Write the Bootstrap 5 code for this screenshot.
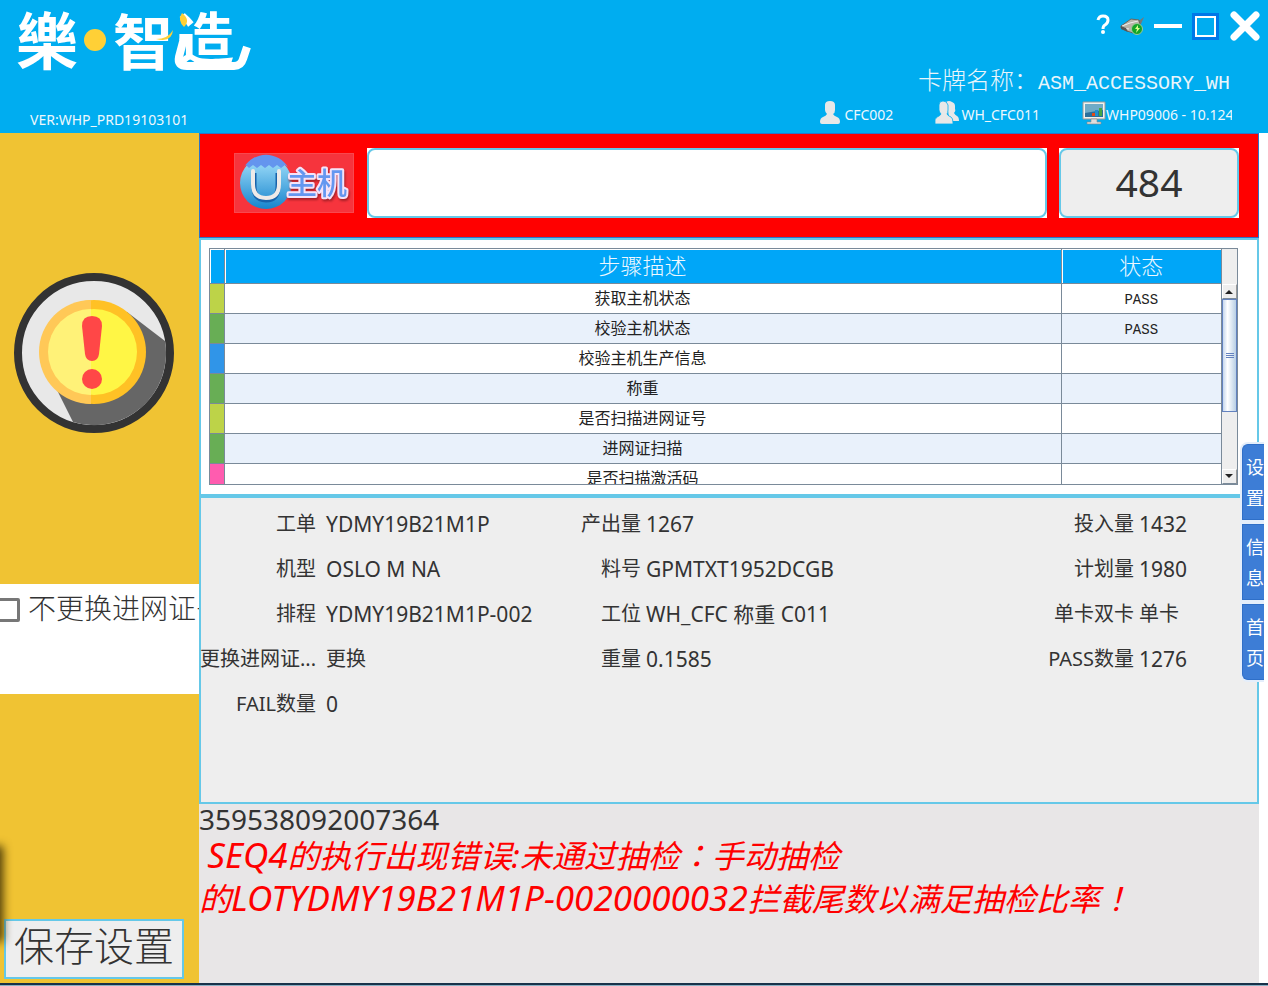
<!DOCTYPE html>
<html lang="zh-CN">
<head>
<meta charset="utf-8">
<meta name="viewport" content="width=device-width, initial-scale=1">
<title>樂·智造</title>
<link href="https://cdn.jsdelivr.net/npm/bootstrap@5.3.0/dist/css/bootstrap.min.css" rel="stylesheet">
<style>
:root{--sky:#00adf0;--edge:#65c8e8;--grid:#7a8a99;--ink:#333}
body{font-family:"Noto Sans","Noto Sans CJK SC",sans-serif;color:var(--ink);background:#fff;font-size:20px;line-height:30px}
.thin{font-family:"Liberation Mono","Noto Sans CJK SC",monospace;font-weight:300}
.topbar{background:var(--sky);height:133px;color:#fff}
.topbar button{background:none;border:0;padding:0;line-height:0}
.brand{padding:8px 0 6px 14px}
.brand svg{overflow:visible}
.small-line{font-size:14px;line-height:20px;color:#eef8fd}
.version{padding-left:30px}
.controls{height:52px;padding-right:8px;gap:10px}
.cardname{font-size:24px;line-height:36px;height:36px;margin-top:13px;padding-right:38px;color:#e9f5fb}
.cardname .code{font-size:20px}
.who{gap:42px;padding-right:36px}
.host{width:150px;overflow:hidden;white-space:nowrap}
.side{width:199px;flex:none;background:#f0c333;position:relative;overflow:hidden}
.warn{margin:140px 0 151px 14px}
.opt{background:#fff;height:110px;padding-top:12px;white-space:nowrap;font-size:28px;line-height:32px}
.opt input{appearance:none;width:24px;height:24px;flex:none;border:3px solid #777;border-radius:2px;background:#fff;margin:2px 8px 0 -4px}
.save{margin:auto 0 4px 4px;width:180px;height:60px;font-size:40px;line-height:52px;padding:4px 0 0;background:#eee;border:2px solid var(--edge);color:var(--ink)}
.shade{position:absolute;left:-12px;bottom:44px;width:12px;height:90px;box-shadow:0 0 10px 3px #4a3a08}
.work{margin-right:9px;min-width:0;position:relative}
.scan{background:red;border:1px solid #2c74c8;height:105px;padding:14px 19px 0 34px;gap:12px}
.field{height:70px;border:2px solid var(--edge);border-radius:8px;background:#fff;width:100%;outline:0;padding:0 12px}
.corner{background:#fff;min-width:0}
.count{background:#eee;width:180px;font-size:39px;line-height:64px;text-align:center}
.unit{width:120px;height:60px;margin:5px 1px 0 0;flex:none;background:#f6343d;border:1px solid #f8484f;padding:0}
.steps{height:258px;border:2px solid var(--edge);padding:8px 19px 9px 8px}
.grid-box{height:237px;border:1px solid var(--grid);overflow:hidden}
.steps table{width:100%;table-layout:fixed;border-collapse:collapse;font-size:16px;line-height:24px;color:#222;text-align:center}
.steps th{background:#00a6f8;color:#eef8ff;height:34px;padding:6px 0 0;font-size:22px;font-weight:300;border:solid var(--grid);border-width:0 1px 1px 0;box-shadow:inset 1px 1px #fff}
.steps td{height:30px;padding:3px 0 0;font-weight:400;border:solid var(--grid);border-width:0 1px 1px 0}
.steps td:last-child{font-size:14px}
.steps th:last-child,.steps td:last-child{border-right:0}
.steps tr:nth-child(even) td{background:#e9f1fb}
.steps td.lime{background:#bdd348!important}.steps td.green{background:#68ae55!important}.steps td.blue{background:#3095e8!important}.steps td.pink{background:#ff5caf!important}
.bar{width:16px;flex:none;background:#eee;border-left:1px solid var(--grid)}
.bar .head{height:35px}
.bar button{height:15px;width:100%;padding:0;border:1px solid #fff;border-right-color:#999;border-bottom-color:#7a8a99;background:#eee;line-height:0}
.thumb{height:113px;border:1px solid #6382bf;background:linear-gradient(90deg,#c5d7ed,#fff 35%,#b8cfe5)}
.info{background:#eee;border:2px solid var(--edge);height:308px;padding-top:11px;display:grid;grid-template-columns:115px minmax(0,260fr) 65px minmax(0,398fr) 95px 123px;grid-auto-rows:45px;white-space:nowrap;margin:0}
.info dt{font-weight:400;display:flex;justify-content:flex-end}
.info dd{margin:0;padding-left:5px;font-size:21px}
.info .first{padding-left:10px}
.info .cn{font-size:20px}
.msg{background:#e8e6e7}
.serial{font-size:28px;line-height:30px}
.err{font-size:32px;line-height:43px;color:red;font-style:italic;white-space:pre-wrap}
.err .latin{font-size:35px;line-height:40px}
.err .mid{font-family:"Noto Sans CJK TC",sans-serif;line-height:40px}
.tabs-side{position:absolute;right:-5px;top:309px;width:24px;overflow:hidden;border-radius:8px 0 0 8px;background:#e4eefb;padding:2px 0 2px 2px;gap:4px;display:flex;flex-direction:column}
.tabs-side button{border:1px solid #2f6fc8;border-right:0;background:#3d7dd6;color:#fff;font-size:18px;line-height:31px;padding:7px 0 7px 3px;height:76px;width:100%;text-align:left;white-space:nowrap;overflow:hidden}
.tabs-side button:first-child{border-radius:6px 0 0 0}.tabs-side button:last-child{border-radius:0 0 0 6px}
.foot{height:3px;background:#8bb0c4;border-top:2px solid #17324a}
</style>
</head>
<body>
<div class="d-flex flex-column min-vh-100">
<header class="topbar d-flex justify-content-between">
  <div>
    <div class="brand">
      <svg class="d-block" width="244" height="96" viewBox="14 8 244 96" role="img" aria-label="樂·智造">
        <g fill="#fff" font-family="Noto Sans CJK TC" font-weight="700">
          <text x="16" y="65" font-size="62">樂</text><text x="113" y="65" font-size="60">智</text><text x="177" y="60" font-size="57">造</text>
        </g>
        <path d="M184 38l-5 19q-2 9 8 9h47q7 0 9-7l4-12" fill="none" stroke="#fff" stroke-width="8"/>
        <circle cx="95" cy="40" r="11" fill="#ffd036"/>
        <path d="M182 13q-5 7 2 14 7-7-2-14zM156 39q12 0 17-9-1 13-17 9z" fill="#ffd036"/>
      </svg>
    </div>
    <div class="small-line version">VER:WHP_PRD19103101</div>
  </div>
  <div class="d-flex flex-column">
    <div class="controls d-flex align-items-center justify-content-end">
      <button type="button" aria-label="帮助"><svg width="14" height="24" viewBox="0 0 14 24"><path d="M2 6q1-4 5-4 5 0 5 4 0 3-3 5-2 1-2 4" fill="none" stroke="#fff" stroke-width="3"/><circle cx="7" cy="18" r="2" fill="#fff"/></svg></button>
      <button type="button" aria-label="连接"><svg width="24" height="20" viewBox="0 0 24 20"><path d="M15 5l5-1 4-3-3 7-4 3z" fill="#777"/><path d="M1 10L11 3l8 1 1 5-7 8-6-2-6-3z" fill="#b9b4a9" stroke="#6a665f"/><path d="M2 10l8-3 8-2M3 12l6 1" stroke="#eee" fill="none"/><path d="M1 10l5 2 2 4-7-3z" fill="#555"/><circle cx="17" cy="13" r="5.500" fill="#14a527" stroke="#9bc99d"/><path d="M18 9l-3 4h2l-1 4 4-5h-2z" fill="#d9ff8e"/></svg></button>
      <button type="button" aria-label="最小化"><svg width="28" height="27"><path d="M0 13h28" stroke="#fff" stroke-width="4"/></svg></button>
      <button type="button" aria-label="最大化"><svg width="28" height="27"><path d="M0 0h27v27H0z" fill="#0078e8"/><path d="M4 4h19v19H4z" fill="#00adf0" stroke="#fff" stroke-width="2"/></svg></button>
      <button type="button" aria-label="关闭"><svg width="30" height="30"><path d="M4 4l22 22M26 4L4 26" stroke="#fff" stroke-width="7" stroke-linecap="round"/></svg></button>
    </div>
    <div class="cardname thin text-end">卡牌名称：<span class="code">ASM_ACCESSORY_WH</span></div>
    <div class="who d-flex small-line">
      <div class="d-flex align-items-end gap-1"><svg width="20" height="24" viewBox="0 0 20 24"><path d="M5 4q0-4 5-4t5 4v5q0 3-2 4 1 2 4 3 3 1 3 5 0 2-2 2H2q-2 0-2-2 0-4 3-5 3-1 4-3-2-2-2-4z" fill="#e8e8e8"/></svg><span>CFC002</span></div>
      <div class="d-flex align-items-end"><svg width="26" height="24" viewBox="0 0 26 24"><path d="M11 1q3-2 6 0 3 1 3 4v3q1 2-1 4 1 2 3 3 2 1 2 5h-9z" fill="#e8e8e8"/><path d="M4 4q0-4 4-4t5 4v5q0 3-1 4 1 2 4 3 2 1 2 6v1H0q-1-5 2-7 3-1 4-3-2-2-2-4z" fill="#e8e8e8" stroke="#00adf0" stroke-width=".8"/></svg><span>WH_CFC011</span></div>
      <div class="d-flex align-items-end host"><svg class="flex-shrink-0" width="24" height="24" viewBox="0 0 24 24"><path d="M1 1h22v17H1z" fill="#f2f2ee" stroke="#999"/><path d="M3 3h18v13H3z" fill="#2b6f9b"/><path d="M3 3h18v6L3 12z" fill="#6fabc7"/><path d="M10 12h3v3h-3z" fill="#e54a15"/><path d="M13 9h3v6h-3z" fill="#1e90d2"/><path d="M17 7h3v8h-3z" fill="#45a645"/><path d="M9 18h6v3h4v2H5v-2h4z" fill="#ddd" stroke="#888" stroke-width=".6"/></svg><span>WHP09006 - 10.124</span></div>
    </div>
  </div>
</header>
<div class="d-flex flex-grow-1">
  <aside class="side d-flex flex-column">
    <svg class="warn flex-shrink-0" width="160" height="160" viewBox="0 0 160 160" role="img" aria-label="警告">
      <circle cx="80" cy="80" r="76" fill="#e8e8e8" stroke="#333" stroke-width="8"/>
      <path d="M113 39L151 68A72 72 0 0 1 59 149L42 115z" fill="#666"/>
      <circle cx="80" cy="79" r="52" fill="#ffc125"/><path d="M77 27a52 52 0 0 0 0 104z" fill="#ffc857"/>
      <circle cx="80" cy="79" r="43" fill="#fff645"/><path d="M77 36a43 43 0 0 0 0 86z" fill="#fff278"/>
      <path d="M68 53q0-10 10-10t10 10l-3 28q-1 7-7 7t-7-7z" fill="#ff4747"/><circle cx="78" cy="106" r="10" fill="#ff4747"/>
    </svg>
    <div class="opt flex-shrink-0 d-flex thin"><input type="checkbox" id="keep"><label for="keep">不更换进网证书</label></div>
    <button type="button" class="save thin flex-shrink-0">保存设置</button>
    <div class="shade"></div>
  </aside>
  <main class="work flex-grow-1 d-flex flex-column">
    <section class="scan d-flex align-items-start">
      <button class="unit" type="button" aria-label="主机">
        <svg class="d-block" width="118" height="58" viewBox="1 1 118 58">
          <defs><linearGradient id="bag" x2="0" y2="1"><stop offset=".15" stop-color="#91d4f5"/><stop offset="1" stop-color="#1684cd"/></linearGradient></defs>
          <circle cx="32" cy="30" r="26" fill="url(#bag)"/>
          <path d="M10 14A26 26 0 0 1 54 14l-3-2-4 3-4-3-4 3-4-3-4 3-4-3-4 3-4-3-4 3-3-3z" fill="#6495ee"/>
          <path d="M20 20v13q0 14 12 14t12-14V20" fill="none" stroke="#1762aa" stroke-width="5"/>
          <path d="M19 18v13q0 14 13 14t13-14V18" fill="none" stroke="#eeeae8" stroke-width="4" stroke-linecap="round"/>
          <text x="53" y="41" font-family="Noto Sans CJK SC" font-weight="500" font-size="30" fill="#6497f0" stroke="#f5e3f8" stroke-width="4" paint-order="stroke" stroke-linejoin="round" style="filter:drop-shadow(1px 2px 1px #a52027)">主机</text>
        </svg>
      </button>
      <div class="corner flex-grow-1 d-flex"><input class="field" type="text" aria-label="扫描"></div>
      <div class="corner flex-shrink-0"><div class="field count">484</div></div>
    </section>
    <section class="steps">
      <div class="grid-box d-flex">
        <div class="flex-grow-1">
        <table class="thin">
          <colgroup><col style="width:14px"><col><col style="width:160px"></colgroup>
          <thead><tr><th></th><th>步骤描述</th><th>状态</th></tr></thead>
          <tbody>
            <tr><td class="lime"></td><td>获取主机状态</td><td>PASS</td></tr>
            <tr><td class="green"></td><td>校验主机状态</td><td>PASS</td></tr>
            <tr><td class="blue"></td><td>校验主机生产信息</td><td></td></tr>
            <tr><td class="green"></td><td>称重</td><td></td></tr>
            <tr><td class="lime"></td><td>是否扫描进网证号</td><td></td></tr>
            <tr><td class="green"></td><td>进网证扫描</td><td></td></tr>
            <tr><td class="pink"></td><td>是否扫描激活码</td><td></td></tr>
          </tbody>
        </table>
        </div>
        <div class="bar d-flex flex-column">
          <div class="head"></div>
          <button type="button" aria-label="向上"><svg width="9" height="5"><path d="M0 5l4-4 4 4z" fill="#222"/></svg></button>
          <div class="thumb d-flex align-items-center justify-content-center"><svg width="8" height="5"><path d="M0 0h8v1H0zM0 2h8v1H0zM0 4h8v1H0z" fill="#6382bf"/></svg></div>
          <button type="button" class="mt-auto" aria-label="向下"><svg width="9" height="5"><path d="M0 0h8L4 4z" fill="#222"/></svg></button>
        </div>
      </div>
    </section>
    <dl class="info">
      <dt>工单</dt><dd class="first">YDMY19B21M1P</dd><dt>产出量</dt><dd>1267</dd><dt>投入量</dt><dd>1432</dd>
      <dt>机型</dt><dd class="first">OSLO M NA</dd><dt>料号</dt><dd>GPMTXT1952DCGB</dd><dt>计划量</dt><dd>1980</dd>
      <dt>排程</dt><dd class="first">YDMY19B21M1P-002</dd><dt>工位</dt><dd>WH_CFC 称重 C011</dd><dt>单卡双卡</dt><dd class="cn">单卡</dd>
      <dt>更换进网证...</dt><dd class="first cn">更换</dd><dt>重量</dt><dd>0.1585</dd><dt>PASS数量</dt><dd>1276</dd>
      <dt>FAIL数量</dt><dd class="first">0</dd>
    </dl>
    <section class="msg flex-grow-1">
      <div class="serial">359538092007364</div>
      <div class="err"> <span class="latin">SEQ4</span>的执行出现错误:未通过抽检<span class="mid" lang="zh-TW">：</span>手动抽检
的<span class="latin">LOTYDMY19B21M1P-0020000032</span>拦截尾数以满足抽检比率<span class="mid" lang="zh-TW">！</span></div>
    </section>
    <nav class="tabs-side" aria-label="侧边">
      <button type="button">设<br>置</button><button type="button">信<br>息</button><button type="button">首<br>页</button>
    </nav>
  </main>
</div>
<footer class="foot"></footer>
</div>
<script src="https://cdn.jsdelivr.net/npm/bootstrap@5.3.0/dist/js/bootstrap.bundle.min.js"></script>
</body>
</html>
